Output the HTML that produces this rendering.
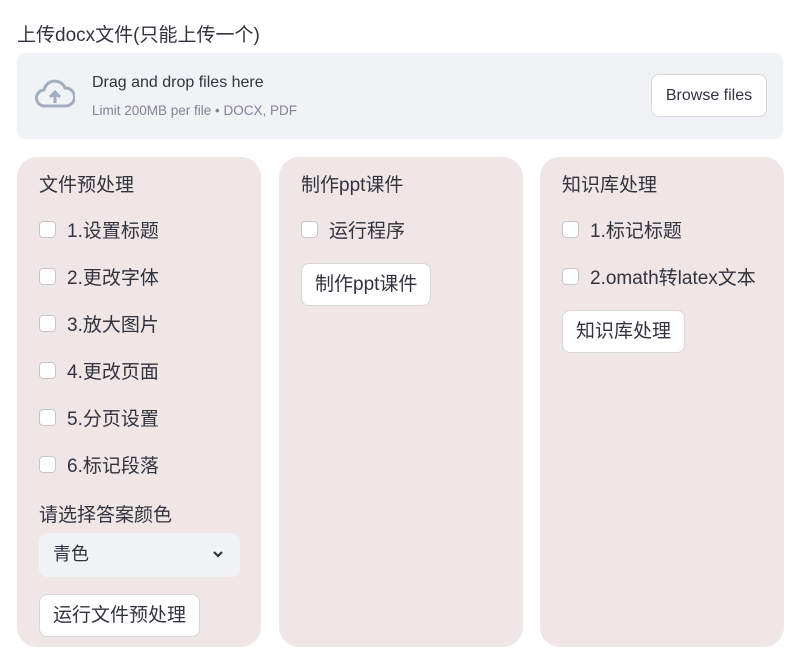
<!DOCTYPE html>
<html><head><meta charset="utf-8"><style>
*{box-sizing:border-box;margin:0;padding:0}
body{width:800px;height:658px;background:#fff;font-family:"Liberation Sans","Noto Sans CJK SC",sans-serif;color:#31333f;position:relative;overflow:hidden}
.abs{position:absolute}
.title{left:17px;top:20px;font-size:19px}
.up{left:17px;top:53px;width:766px;height:86px;background:#f0f2f6;border-radius:8px}
.panel{top:157px;width:244px;height:490px;background:#efe6e5;border-radius:20px}
.h{font-size:19px;left:22px;top:13px;position:absolute}
.cb{position:absolute;left:22px;font-size:19px;display:flex;align-items:center}
.cb i{display:inline-block;width:17px;height:17px;border:1px solid #c5c6cc;border-radius:4px;background:#fff;margin-right:11px}
.btn{position:absolute;left:22px;background:#fff;border:1px solid #d6d6d9;border-radius:8px;font-size:19px;padding:0 13px;height:43px;line-height:41px}
</style></head><body>
<div class="abs title">上传docx文件(只能上传一个)</div>
<div class="abs up">
<svg class="abs" style="left:18px;top:26px" width="40" height="30" viewBox="0 0 40 30"><path d="M10 27 A8 8 0 0 1 9 11 A11 11 0 0 1 30 9 A9 9 0 0 1 31 27 Z" fill="none" stroke="#a3adc2" stroke-width="3"/><path d="M20 24 V14 M15 18 L20 13 L25 18" stroke="#a3adc2" stroke-width="3" fill="none"/><path d="M15 18 L20 13 L25 18Z" fill="#a3adc2"/></svg>
<div class="abs" style="left:75px;top:21px;font-size:16px">Drag and drop files here</div>
<div class="abs" style="left:75px;top:50px;font-size:13.5px;color:#808495">Limit 200MB per file • DOCX, PDF</div>
<div class="abs" style="left:634px;top:21px;width:116px;height:43px;background:#fff;border:1px solid #d6d6d9;border-radius:8px;font-size:16px;line-height:41px;text-align:center">Browse files</div>
</div>
<div class="abs panel" style="left:17px">
<div class="h">文件预处理</div>
<div class="cb" style="top:59px"><i></i>1.设置标题</div>
<div class="cb" style="top:106px"><i></i>2.更改字体</div>
<div class="cb" style="top:153px"><i></i>3.放大图片</div>
<div class="cb" style="top:200px"><i></i>4.更改页面</div>
<div class="cb" style="top:247px"><i></i>5.分页设置</div>
<div class="cb" style="top:294px"><i></i>6.标记段落</div>
<div class="h" style="top:343px">请选择答案颜色</div>
<div class="abs" style="left:22px;top:376px;width:201px;height:44px;background:#f0f2f6;border-radius:8px;font-size:18px;line-height:42px;padding-left:14px">青色<svg class="abs" style="right:16px;top:17px" width="12" height="9" viewBox="0 0 12 9"><path d="M2 2 L6 6 L10 2" stroke="#31333f" stroke-width="2.2" fill="none"/></svg></div>
<div class="btn" style="top:437px">运行文件预处理</div>
</div>
<div class="abs panel" style="left:279px">
<div class="h">制作ppt课件</div>
<div class="cb" style="top:59px"><i></i>运行程序</div>
<div class="btn" style="top:106px">制作ppt课件</div>
</div>
<div class="abs panel" style="left:540px">
<div class="h">知识库处理</div>
<div class="cb" style="top:59px"><i></i>1.标记标题</div>
<div class="cb" style="top:106px"><i></i>2.omath转latex文本</div>
<div class="btn" style="top:153px">知识库处理</div>
</div>
</body></html>
